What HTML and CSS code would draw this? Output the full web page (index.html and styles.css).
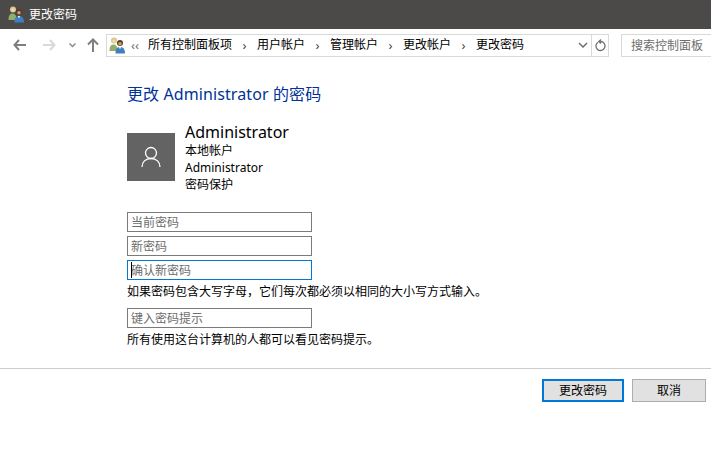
FILE: index.html
```html
<!DOCTYPE html>
<html lang="zh-CN">
<head>
<meta charset="utf-8">
<title>更改密码</title>
<link rel="stylesheet" href="styles.css">
</head>
<body>
<header class="titlebar">
  <svg class="users-icon" width="17" height="17" viewBox="0 0 17 17"><use href="#users"/></svg>
  <span class="title-text">更改密码</span>
</header>
<svg class="defs" width="0" height="0">
  <symbol id="users" viewBox="0 0 17 17">
    <circle cx="5" cy="3.500" r="3" fill="#d8c48a"/>
    <circle cx="5" cy="4" r="1.800" fill="#f0d9b0"/>
    <path d="M.5 13c0-3.500 1.500-5.500 4-5.500s4 2 4 5.500v1H.5z" fill="#8fae6a"/>
    <circle cx="11" cy="6" r="3" fill="#5e3a22"/>
    <circle cx="11" cy="6.800" r="1.800" fill="#c99a72"/>
    <path d="M6.500 16.500c0-4.500 1.500-6.500 4.500-6.500s5 2 5 6.500z" fill="#3f7fbf"/>
    <path d="M10 10h2l-1 2.500z" fill="#fff"/>
  </symbol>
</svg>
<nav class="toolbar">
  <div class="nav-buttons">
    <svg class="nav-back" width="14" height="12" viewBox="0 0 14 12"><path d="M6 1 1.500 6 6 11M1.500 6H13" fill="none" stroke="#7f7f7f" stroke-width="2"/></svg>
    <svg class="nav-forward" width="14" height="12" viewBox="0 0 14 12"><path d="M8 1l4.500 5L8 11M12.500 6H1" fill="none" stroke="#d9d9d9" stroke-width="2"/></svg>
    <svg class="nav-down" width="7" height="5" viewBox="0 0 7 5"><path d="M.5.500 3.500 3.500 6.500.500" fill="none" stroke="#8a8a8a" stroke-width="1.500"/></svg>
    <svg class="nav-up" width="12" height="14" viewBox="0 0 12 14"><path d="M1 6.500 6 1.500l5 5M6 1.500V14" fill="none" stroke="#7f7f7f" stroke-width="2"/></svg>
  </div>
  <div class="address">
    <svg class="users-icon" width="17" height="17" viewBox="0 0 17 17"><use href="#users"/></svg>
    <span class="crumb-more">‹‹</span>
    <span class="crumb">所有控制面板项</span><span class="sep">›</span>
    <span class="crumb">用户帐户</span><span class="sep">›</span>
    <span class="crumb">管理帐户</span><span class="sep">›</span>
    <span class="crumb">更改帐户</span><span class="sep">›</span>
    <span class="crumb">更改密码</span>
    <svg class="addr-chevron" width="10" height="6" viewBox="0 0 10 6"><path d="M1 1l4 4 4-4" fill="none" stroke="#707070" stroke-width="1.500"/></svg>
    <div class="refresh">
      <svg width="11" height="13" viewBox="0 0 11 13"><path d="M3 3.200a4.500 4.500 0 1 0 3-.7H3.800M6 .500 3.800 2.500 6 4.500" fill="none" stroke="#707070" stroke-width="1.300"/></svg>
    </div>
  </div>
  <div class="search">搜索控制面板</div>
</nav>
<main class="content">
  <h1 class="heading">更改 Administrator 的密码</h1>
  <section class="account">
    <div class="avatar">
      <svg width="20" height="22" viewBox="0 0 20 22"><circle cx="10" cy="7" r="5.500" fill="none" stroke="#fff" stroke-width="1.300"/><path d="M1 21c0-5 3.500-8.500 9-8.500S19 16 19 21" fill="none" stroke="#fff" stroke-width="1.300"/></svg>
    </div>
    <div class="account-info">
      <div class="account-name">Administrator</div>
      <div class="account-line">本地帐户</div>
      <div class="account-line">Administrator</div>
      <div class="account-line">密码保护</div>
    </div>
  </section>
  <form class="fields">
    <div class="field">当前密码</div>
    <div class="field">新密码</div>
    <div class="field field-focus"><span class="caret"></span>确认新密码</div>
    <p class="note">如果密码包含大写字母，它们每次都必须以相同的大小写方式输入。</p>
    <div class="field field-hint">键入密码提示</div>
    <p class="note">所有使用这台计算机的人都可以看见密码提示。</p>
  </form>
</main>
<footer class="actions">
  <button class="btn btn-primary" type="button">更改密码</button>
  <button class="btn btn-cancel" type="button">取消</button>
</footer>
</body>
</html>
```
FILE: styles.css
```css
* { box-sizing: border-box; }
html, body { margin: 0; padding: 0; }
body {
  width: 711px;
  height: 476px;
  overflow: hidden;
  background: #fff;
  color: #000;
  font: 12px/16px "Noto Sans", "Noto Sans CJK SC", sans-serif;
}
.defs { display: block; height: 0; }
.titlebar {
  height: 29px;
  background: #4b4a48;
  color: #fff;
  display: flex;
  align-items: center;
  padding-left: 8px;
  gap: 4px;
}
.title-text { font-size: 12px; }
.toolbar {
  height: 32px;
  display: flex;
  align-items: center;
}
.nav-buttons { width: 106px; height: 22px; position: relative; display: flex; align-items: center; padding-left: 13px; }
.nav-back { margin-right: 15px; }
.nav-forward { margin-right: 13px; }
.nav-down { margin-right: 11px; }
.address {
  width: 503px;
  height: 23px;
  border: 1px solid #d9d9d9;
  display: flex;
  align-items: center;
  padding-left: 2px;
  font-size: 12px;
  margin-right: 12px;
}
.crumb-more { color: #707070; margin: 0 9px 0 5px; font-size: 13px; width: 8px; }
.crumb { white-space: nowrap; }
.sep { color: #444; width: 25px; text-align: center; font-size: 13px; }
.addr-chevron { margin-left: auto; margin-right: 3px; }
.refresh {
  width: 17px;
  height: 21px;
  border-left: 1px solid #d9d9d9;
  display: flex;
  align-items: center;
  justify-content: center;
}
.search {
  flex: 1;
  height: 23px;
  border: 1px solid #d9d9d9;
  border-right: 0;
  color: #6d6d6d;
  padding-left: 9px;
  line-height: 21px;
  white-space: nowrap;
}
.content { padding: 22px 0 0 127px; }
.heading {
  margin: 0 0 18px;
  height: 22px;
  font-size: 16px;
  line-height: 22px;
  font-weight: 400;
  letter-spacing: 0.1px;
  color: #003399;
}
.account { display: flex; gap: 10px; height: 60px; margin-bottom: 19px; }
.avatar {
  width: 48px;
  height: 48px;
  margin-top: 10px;
  background: #636363;
  display: flex;
  align-items: center;
  justify-content: center;
}
.account-name { font-size: 16px; line-height: 20px; margin-top: -1px; }
.account-line { line-height: 17px; }
.fields { width: 500px; padding-top: 10px; }
.field {
  width: 185px;
  height: 20px;
  border: 1px solid #7a7a7a;
  color: #6d6d6d;
  padding-left: 3px;
  line-height: 20px;
  margin-bottom: 4px;
  position: relative;
}
.field-focus { border-color: #0078d7; }
.caret { position: absolute; left: 3px; top: 1px; width: 1px; height: 16px; background: #000; }
.note { margin: 0 0 8px; line-height: 16px; white-space: nowrap; }
.field-hint { margin-bottom: 4px; }
.actions {
  position: absolute;
  left: 0;
  top: 368px;
  width: 711px;
  border-top: 1px solid #ccc;
  padding: 10px 5px 0 0;
  display: flex;
  justify-content: flex-end;
  gap: 8px;
}
.btn {
  height: 23px;
  padding: 0;
  background: #e1e1e1;
  border: 1px solid #adadad;
  color: #000;
  font: inherit;
  line-height: 19px;
}
.btn-primary { width: 82px; border: 2px solid #0078d7; }
.btn-cancel { width: 74px; }
```
